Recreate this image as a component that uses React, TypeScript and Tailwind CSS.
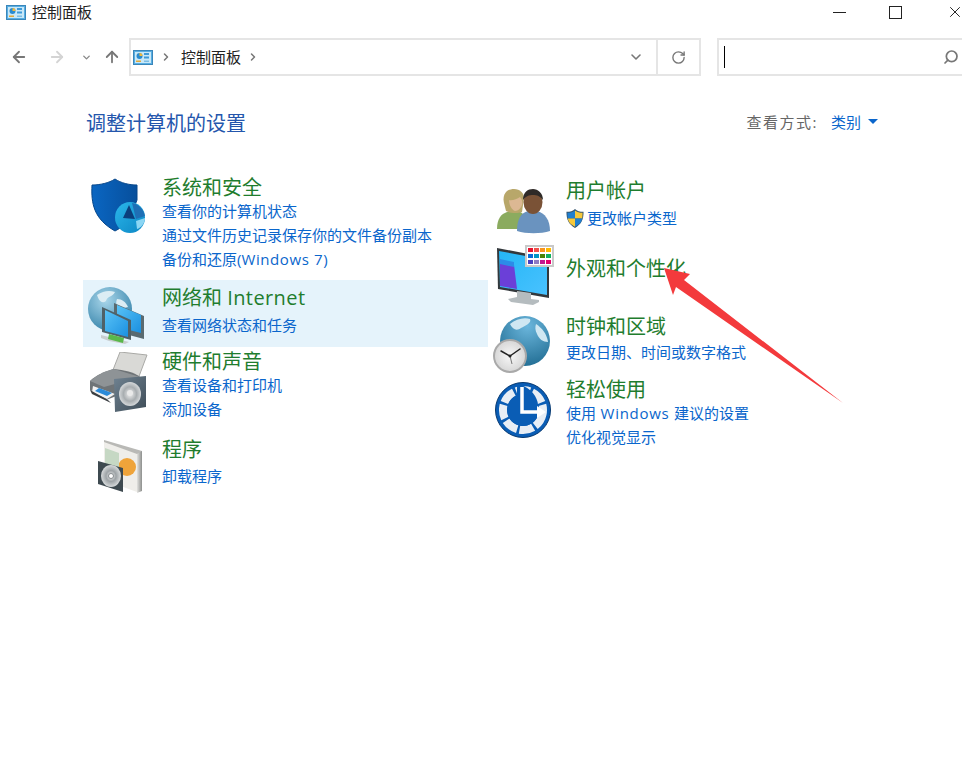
import { ArrowLeft, ArrowRight, ArrowUp, ChevronDown, ChevronRight, RotateCw, Search, X } from "lucide-react";
import type { ReactNode } from "react";

function PanelIcon({ className }: { className?: string }) {
  return (
    <svg viewBox="0 0 20 15" className={className}>
      <rect x="0.5" y="0.5" width="19" height="14" fill="#58aee2" stroke="#3a86ba" />
      <rect x="2" y="2" width="16" height="11" fill="#c9e8f8" />
      <circle cx="6.5" cy="6" r="3" fill="#2a8bd0" />
      <path d="M6.5 6V3a3 3 0 0 1 3 3z" fill="#f0b83c" />
      <rect x="11" y="3" width="5" height="2" fill="#3f9ad8" />
      <rect x="11" y="6.5" width="5" height="2" fill="#3f9ad8" />
      <rect x="3" y="10.5" width="5" height="1.5" fill="#e2a93a" />
      <rect x="11" y="10.5" width="5" height="1.5" fill="#7dbde3" />
    </svg>
  );
}

function ShieldIcon() {
  return (
    <svg viewBox="0 0 56 56" className="h-[56px] w-[56px] shrink-0">
      <defs>
        <linearGradient id="sh" x1="0" x2="1">
          <stop offset="0" stopColor="#0a66c2" />
          <stop offset="1" stopColor="#074f9c" />
        </linearGradient>
        <linearGradient id="disc" x1="0" x2="1" y1="0" y2="1">
          <stop offset="0" stopColor="#2bb7ea" />
          <stop offset="1" stopColor="#0c86c4" />
        </linearGradient>
      </defs>
      <path d="M24 1C18 5 9 7 1 7c-1 19 2 34 23 46 6-3 11-7 14-11l8-20V7C38 7 30 5 24 1z" fill="url(#sh)" stroke="#06468a" strokeWidth="1" />
      <ellipse cx="39" cy="39.500" rx="15" ry="15.500" fill="url(#disc)" />
      <path d="M38 27l-6 13 12 1z" fill="#0b3f7c" />
      <path d="M41 25c6 1 11 5 13 13l-9 3z" fill="#1f6fb5" />
      <path d="M45 43l9-3c0 5-4 10-8 11z" fill="#8bd6f4" />
    </svg>
  );
}

function NetworkIcon() {
  return (
    <svg viewBox="0 0 60 60" className="h-[60px] w-[60px] shrink-0">
      <defs>
        <radialGradient id="gl" cx="0.4" cy="0.3" r="0.8">
          <stop offset="0" stopColor="#a9d6ea" />
          <stop offset="1" stopColor="#2e7ea6" />
        </radialGradient>
        <linearGradient id="scr" x1="0" x2="1" y1="0" y2="1">
          <stop offset="0" stopColor="#59c3f7" />
          <stop offset="1" stopColor="#1b90e0" />
        </linearGradient>
      </defs>
      <circle cx="23" cy="24" r="22" fill="url(#gl)" />
      <path d="M10 10c6-4 12-5 18-3-2 5-8 4-9 9-4 3-7 0-9-6zM30 14c5 0 9 3 11 8l-8 2c-3-3-5-5-3-10z" fill="#dcedf4" />
      <path d="M27 18l30 13v23l-30-8z" fill="#596a70" />
      <path d="M30 20l24 10v18l-24-6z" fill="url(#scr)" />
      <path d="M15 22l29 13v20l-29-8z" fill="#4f6168" />
      <path d="M18 25l23 11v16l-23-6z" fill="url(#scr)" />
      <path d="M14 50l12 3 16 4-4 2-16-3-8-3z" fill="#c9ced0" />
      <path d="M22 49l15 4-1 5-15-4z" fill="#59b84a" />
    </svg>
  );
}

function PrinterIcon() {
  return (
    <svg viewBox="0 0 60 60" className="h-[60px] w-[60px] shrink-0">
      <defs>
        <linearGradient id="spk" x1="0" x2="1" y1="0" y2="1">
          <stop offset="0" stopColor="#6f8291" />
          <stop offset="1" stopColor="#3f4d58" />
        </linearGradient>
        <radialGradient id="cone">
          <stop offset="0" stopColor="#f1f1f1" />
          <stop offset="0.6" stopColor="#a8adb0" />
          <stop offset="1" stopColor="#d5d8da" />
        </radialGradient>
      </defs>
      <path d="M32 0l27 3-9 24-27-4z" fill="#d9d9d6" stroke="#a9a9a6" strokeWidth="1" />
      <path d="M2 29c6-6 16-10 24-12 10 1 20 3 26 8v10L18 48 2 38z" fill="#6f7477" />
      <path d="M2 29l14 6 36-10-26-8C16 19 8 24 2 29z" fill="#8e9396" />
      <path d="M5 34l22 8-8 5-15-7z" fill="#f2f2f2" />
      <path d="M11 36l13 5-5 3-12-5z" fill="#2b8ad8" />
      <path d="M2 38l18 10 3 3L4 42z" fill="#3b3f42" />
      <path d="M26 27l32-3v31l-31 5z" fill="url(#spk)" />
      <ellipse cx="42" cy="42" rx="11" ry="12" fill="url(#cone)" />
      <circle cx="42" cy="41" r="3" fill="#eaeaea" />
    </svg>
  );
}

function ProgramIcon() {
  return (
    <svg viewBox="0 0 48 54" className="h-[54px] w-[48px] shrink-0">
      <defs>
        <linearGradient id="box" x1="0" x2="1">
          <stop offset="0" stopColor="#e2e2df" />
          <stop offset="1" stopColor="#8d8f8d" />
        </linearGradient>
        <radialGradient id="cd">
          <stop offset="0" stopColor="#f4f4f4" />
          <stop offset="0.5" stopColor="#9da3a6" />
          <stop offset="1" stopColor="#d7dadb" />
        </radialGradient>
      </defs>
      <path d="M7 0l38 11v40L7 42z" fill="#b9b9b6" />
      <path d="M7 2l33 12v38L7 40z" fill="#efeeea" />
      <path d="M40 14l5-3v40l-5 2z" fill="url(#box)" />
      <circle cx="30" cy="27" r="9" fill="#efa43a" />
      <path d="M8 8l14 5v20L8 30z" fill="#c6d8c4" />
      <path d="M1 21l25 7v24L1 44z" fill="#3e4a50" />
      <ellipse cx="14" cy="36" rx="10" ry="11" fill="url(#cd)" />
      <circle cx="14" cy="36" r="2.500" fill="#fff" stroke="#848a8d" />
    </svg>
  );
}

function UsersIcon() {
  return (
    <svg viewBox="0 0 54 48" className="h-[48px] w-[54px] shrink-0">
      <path d="M0 42c0-10 4-15 10-17l10-1c7 1 10 7 10 18z" fill="#8bab5f" />
      <path d="M7 16C5 7 10 2 17 2c6 0 10 4 10 9l-2 14c-5 2-13 1-16-1z" fill="#b8a76a" />
      <path d="M12 13c3 1 8-1 11-3 2 3 3 5 2 8s-4 6-7 6c-3-1-6-6-6-11z" fill="#dcb893" />
      <path d="M20 44c0-12 4-18 11-20h9c8 2 13 9 13 20-9 3-24 3-33 0z" fill="#6a93bf" />
      <ellipse cx="36" cy="15" rx="9.500" ry="12" fill="#7a5236" />
      <path d="M26 13c0-8 5-11 10-11s10 4 10 11c-3-4-6-5-10-5s-7 1-10 5z" fill="#2f2a27" />
    </svg>
  );
}

function UacShield() {
  return (
    <svg viewBox="0 0 18 20" className="h-[19px] w-[18px] shrink-0">
      <path d="M9 0c2 2 5 3 9 3 0 8-2 13-9 17C2 16 0 11 0 3c4 0 7-1 9-3z" fill="#35546e" />
      <path d="M9 1.500V10H1.400C1.200 8 1 6 1 4c3 0 6-1 8-2.500z" fill="#1f7fd0" />
      <path d="M9 1.500c2 1.500 5 2.500 8 2.500 0 2-.2 4-.4 6H9z" fill="#f6c83a" />
      <path d="M1.400 10H9v8.700C4 16 2 13.500 1.400 10z" fill="#f6c83a" />
      <path d="M9 10h7.600C16 13.500 14 16 9 18.700z" fill="#1f7fd0" />
    </svg>
  );
}

function MonitorIcon() {
  return (
    <svg viewBox="0 0 58 60" className="h-[60px] w-[58px] shrink-0">
      <defs>
        <linearGradient id="mon" x1="0" x2="1" y1="0" y2="1">
          <stop offset="0" stopColor="#25b6f5" />
          <stop offset="1" stopColor="#49c2ff" />
        </linearGradient>
      </defs>
      <path d="M0 3l52 10v40L1 44z" fill="#33383c" />
      <path d="M2 6l48 9v35L3 42z" fill="url(#mon)" />
      <path d="M3 17l14 3 3 24-17-3z" fill="#6b3fd8" />
      <path d="M3 14l14 3 0 5-14-3z" fill="#2c8be8" />
      <path d="M20 46l14 2v6l8 1v2l-6 3-22-3-3-3 9-2z" fill="#b5bcbf" />
      <rect x="28" y="0" width="29" height="22" fill="#c9c9c9" />
      <rect x="30" y="2" width="25" height="18" fill="#fff" />
      <g>
        <rect x="31" y="3" width="5" height="4" fill="#e8112d" />
        <rect x="37" y="3" width="5" height="4" fill="#f0504a" />
        <rect x="43" y="3" width="5" height="4" fill="#f7941d" />
        <rect x="49" y="3" width="5" height="4" fill="#ffb900" />
        <rect x="31" y="9" width="5" height="4" fill="#0a6bd6" />
        <rect x="37" y="9" width="5" height="4" fill="#0097c4" />
        <rect x="43" y="9" width="5" height="4" fill="#498205" />
        <rect x="49" y="9" width="5" height="4" fill="#10b060" />
        <rect x="31" y="15" width="5" height="4" fill="#4a3fc0" />
        <rect x="37" y="15" width="5" height="4" fill="#8e7cc3" />
        <rect x="43" y="15" width="5" height="4" fill="#c2188f" />
        <rect x="49" y="15" width="5" height="4" fill="#e3006d" />
      </g>
    </svg>
  );
}

function ClockIcon() {
  return (
    <svg viewBox="0 0 60 58" className="h-[58px] w-[60px] shrink-0">
      <defs>
        <radialGradient id="glob" cx="0.55" cy="0.2" r="0.85">
          <stop offset="0" stopColor="#6bb6dc" />
          <stop offset="1" stopColor="#1f6b91" />
        </radialGradient>
        <radialGradient id="face">
          <stop offset="0" stopColor="#f8f8f8" />
          <stop offset="1" stopColor="#d8d8d8" />
        </radialGradient>
      </defs>
      <circle cx="33" cy="25" r="25" fill="url(#glob)" />
      <path d="M18 8c6-5 14-7 20-5 2 4-5 7-9 9-4 3-8 2-11-4zM44 8c6 4 11 10 12 18-5 0-9-3-11-8-2-4-2-7-1-10z" fill="#cfe7f2" />
      <circle cx="18" cy="40" r="17" fill="#a9a9a9" />
      <circle cx="18" cy="40" r="15" fill="url(#face)" />
      <path d="M18 40L9 35M18 40l10-7" stroke="#222" strokeWidth="1.500" strokeLinecap="round" />
      <path d="M18 40l2 8" stroke="#777" strokeWidth="1" />
      <circle cx="18" cy="40" r="1.500" fill="#222" />
    </svg>
  );
}

function EaseIcon() {
  return (
    <svg viewBox="0 0 56 56" className="h-[56px] w-[56px] shrink-0">
      <circle cx="28" cy="28" r="27.500" fill="#0a5db5" stroke="#07386f" strokeWidth="1" />
      <circle cx="28" cy="28" r="20" fill="none" stroke="#e8eef5" strokeWidth="8" strokeDasharray="14 2.500" transform="rotate(12 28 28)" />
      <path d="M38 22A17 20 0 0 0 22 8" stroke="#0a5db5" strokeWidth="10" fill="none" />
      <circle cx="28" cy="28" r="16" fill="#0a5db5" />
      <path d="M27 5v25h15" stroke="#fff" strokeWidth="3.500" fill="none" />
      <path d="M42 24l9 6-9 6z" fill="#fff" />
    </svg>
  );
}

function Title({ children }: { children: ReactNode }) {
  return <div className="h-6 text-[20px] leading-[26px] text-[#1f7d2e]">{children}</div>;
}

function Link({ children }: { children: ReactNode }) {
  return <div className="h-6 text-[15px] leading-6 text-[#0a66cc]">{children}</div>;
}

export default function App() {
  return (
    <div
      className="relative h-[776px] w-[962px] overflow-hidden bg-white"
      style={{ fontFamily: '"Open Sans", "Noto Sans CJK SC", sans-serif' }}
    >
      {/* title bar */}
      <div className="flex h-6 items-center pl-[6px]">
        <PanelIcon className="h-[15px] w-5" />
        <span className="ml-[6px] text-[15px] text-[#222]">控制面板</span>
        <div className="ml-auto flex items-center text-[#222]">
          <div className="mr-[43px] h-[1px] w-[13px] bg-[#222]" />
          <div className="mr-[44px] h-[13px] w-[13px] border border-[#222]" />
          <X size={18} strokeWidth={1.3} className="-mr-[2px]" />
        </div>
      </div>

      {/* nav row */}
      <div className="mt-[14px] flex h-[38px] items-center">
        <ArrowLeft size={18} strokeWidth={2.4} className="ml-[10px] text-[#777]" />
        <ArrowRight size={18} strokeWidth={2.4} className="ml-5 text-[#d4d4d4]" />
        <ChevronDown size={11} strokeWidth={3} className="ml-[15px] text-[#888]" />
        <ArrowUp size={18} strokeWidth={2.4} className="ml-[11px] text-[#777]" />
        <div className="ml-[8px] flex h-[38px] w-[572px] items-center border-2 border-[#e5e5e5]">
          <PanelIcon className="ml-[2px] h-[15px] w-5" />
          <ChevronRight size={12} strokeWidth={3} className="ml-[7px] text-[#777]" />
          <span className="ml-[9px] text-[15px] text-[#222]">控制面板</span>
          <ChevronRight size={12} strokeWidth={3} className="ml-[6px] text-[#777]" />
          <ChevronDown size={16} strokeWidth={2.4} className="ml-auto mr-[12px] text-[#777]" />
          <div className="flex h-full w-[43px] items-center justify-center border-l-2 border-[#e5e5e5]">
            <RotateCw size={15} strokeWidth={2.2} className="text-[#777]" />
          </div>
        </div>
        <div className="ml-[16px] flex h-[38px] flex-1 items-center border-2 border-r-0 border-[#e5e5e5]">
          <div className="ml-[5px] h-[22px] w-[1px] bg-black" />
          <Search size={16} strokeWidth={2.6} className="ml-auto mr-[3px] -scale-x-100 text-[#777]" />
        </div>
      </div>

      {/* heading */}
      <div className="mt-[33px] flex h-[30px] items-center pl-[86px] pr-[84px]">
        <h1 className="text-[20px] font-normal text-[#2456ac]">调整计算机的设置</h1>
        <span className="ml-auto -mt-[3px] text-[15px] tracking-[1.5px] text-[#666]">查看方式:</span>
        <span className="ml-[13px] -mt-[3px] text-[15px] text-[#0a66cc]">类别</span>
        <span className="ml-[7px] -mt-[5px] h-0 w-0 border-x-[5px] border-t-[5px] border-x-transparent border-t-[#0a66cc]" />
      </div>

      {/* categories */}
      <div className="mt-[36px] flex pl-[83px]">
        <div className="w-[405px]">
          <div className="flex h-[105px] pl-[8px] pt-[3px]">
            <ShieldIcon />
            <div className="ml-[15px] -mt-[3px]">
              <Title>系统和安全</Title>
              <Link>查看你的计算机状态</Link>
              <Link>通过文件历史记录保存你的文件备份副本</Link>
              <Link>
                备份和还原(<span className="tracking-[0.6px]">Windows 7</span>)
              </Link>
            </div>
          </div>
          <div className="flex h-[67px] bg-[#e5f3fb] pl-[4px] pt-[5px]">
            <NetworkIcon />
            <div className="ml-[15px]">
              <Title>
                网络和 <span className="tracking-[0.4px]">Internet</span>
              </Title>
              <div className="mt-[4px]">
                <Link>查看网络状态和任务</Link>
              </div>
            </div>
          </div>
          <div className="flex h-[90px] pl-[5px] pt-[5px]">
            <PrinterIcon />
            <div className="ml-[14px] -mt-[3px]">
              <Title>硬件和声音</Title>
              <Link>查看设备和打印机</Link>
              <Link>添加设备</Link>
            </div>
          </div>
          <div className="flex pl-[14px] pt-[3px]">
            <ProgramIcon />
            <div className="ml-[17px] -mt-[3px]">
              <Title>程序</Title>
              <div className="mt-[3px]">
                <Link>卸载程序</Link>
              </div>
            </div>
          </div>
        </div>

        <div className="flex-1">
          <div className="flex h-[70px] pl-[9px] pt-[12px]">
            <UsersIcon />
            <div className="ml-[15px] -mt-[9px]">
              <Title>用户帐户</Title>
              <div className="mt-[4px] flex items-center">
                <UacShield />
                <div className="ml-[3px]">
                  <Link>更改帐户类型</Link>
                </div>
              </div>
            </div>
          </div>
          <div className="flex h-[71px] pl-[9px]">
            <MonitorIcon />
            <div className="ml-[11px] pt-[11px]">
              <Title>外观和个性化</Title>
            </div>
          </div>
          <div className="flex h-[66px] pl-[4px]">
            <ClockIcon />
            <div className="ml-[14px] -mt-[2px]">
              <Title>时钟和区域</Title>
              <div className="mt-[2px]">
                <Link>更改日期、时间或数字格式</Link>
              </div>
            </div>
          </div>
          <div className="flex pl-[7px]">
            <EaseIcon />
            <div className="ml-[15px] -mt-[5px]">
              <Title>轻松使用</Title>
              <Link>
                使用<span className="tracking-[0.7px]"> Windows </span>建议的设置
              </Link>
              <Link>优化视觉显示</Link>
            </div>
          </div>
        </div>
      </div>

      {/* red annotation arrow over the page */}
      <svg viewBox="0 0 962 776" className="pointer-events-none absolute inset-0 h-[776px] w-[962px]">
        <path d="M664 268L690 274L684 280L843 403L676 287L673 295z" fill="#f33a3c" />
      </svg>
    </div>
  );
}
